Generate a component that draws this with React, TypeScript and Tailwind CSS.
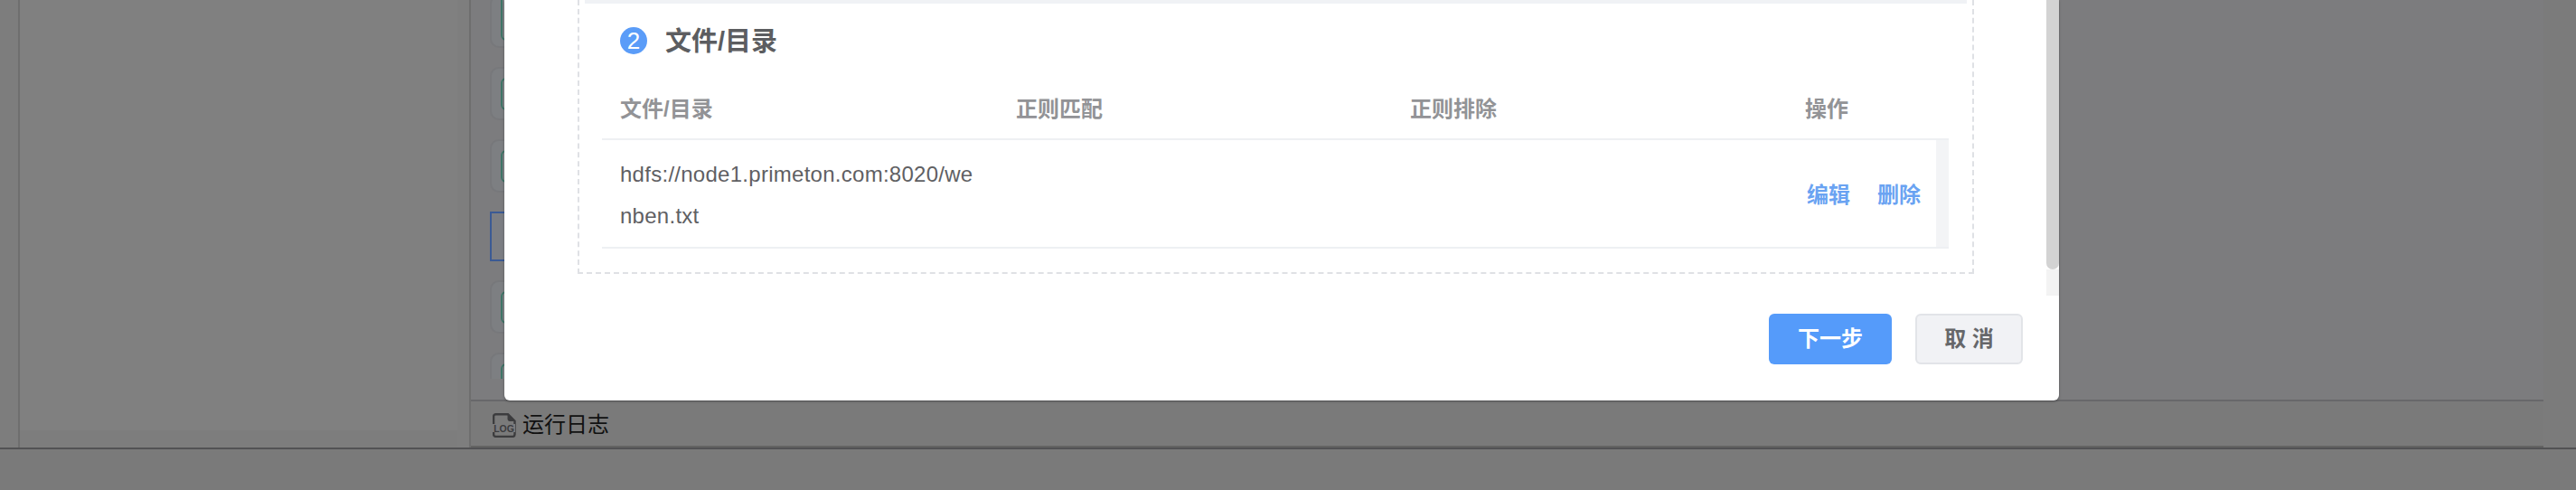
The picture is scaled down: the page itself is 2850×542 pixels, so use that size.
const cjk = "font-['Liberation_Sans','Noto_Sans_CJK_SC',sans-serif]";

function NodeCard({ selected, inner }: { selected?: boolean; inner?: string }) {
  if (selected) {
    return <div className="h-[55px] w-[200px] shrink-0 border-2 border-[#3b5a94] bg-[#7c7e83]" />;
  }
  return (
    <div className="flex h-[59px] w-[200px] shrink-0 items-center rounded-[10px] border-2 border-[#77787b] bg-[#7d7f82] pl-[10px]">
      <div className={`${inner} w-[60px] rounded-[6px] border-2 border-[#3f7668] bg-[#7f8386]`} />
    </div>
  );
}

function LogIcon() {
  return (
    <svg width="26" height="27" viewBox="0 0 26 27" fill="none" className="shrink-0">
      <path
        d="M3.5 1.2h13.5l7.5 7.5v14.8a2.4 2.4 0 0 1-2.4 2.4H3.5a2.4 2.4 0 0 1-2.4-2.4V3.6a2.4 2.4 0 0 1 2.4-2.4Z"
        stroke="#3c3c3e"
        strokeWidth="2.4"
      />
      <path d="M16.5 1.5v5a2.4 2.4 0 0 0 2.4 2.4h5.2Z" fill="#3c3c3e" />
      <rect x="0" y="12" width="25" height="9" fill="#7a7a7c" />
      <text x="12.5" y="20.5" textAnchor="middle" fontSize="10.5" fontWeight="700" fill="#3c3c3e" fontFamily="Liberation Sans, sans-serif">
        LOG
      </text>
    </svg>
  );
}

function Modal() {
  return (
    <div className="absolute left-[558px] top-0 flex h-[443px] w-[1720px] overflow-hidden rounded-b-[6px] bg-white shadow-[0_1px_3px_rgba(0,0,0,0.3)]">
      <div className="flex flex-1 flex-col pl-[81px]">
        <div className="flex h-[303px] w-[1545px] flex-col border-x-2 border-b-2 border-dashed border-[#dfe1e5] px-[6px]">
          <div className="h-[4px] w-full bg-[#f0f2f5]" />
          <div className="ml-[39px] mt-[26px] flex h-[30px] items-center gap-[20px]">
            <span className="flex h-[30px] w-[30px] items-center justify-center rounded-full bg-[#5a9cf8] text-[26px] text-white">2</span>
            <span className="pt-[1px] text-[29px] font-bold leading-[30px] text-[#5c5d60]">文件/目录</span>
          </div>
          <div className="ml-[19px] mt-[35px] w-[1490px]">
            <div className="grid h-[60px] grid-cols-[438px_436px_437px_1fr] border-b-2 border-[#eef0f3] pl-[20px] text-[24px] font-bold leading-[52px] text-[#929396]">
              <span>文件/目录</span>
              <span>正则匹配</span>
              <span>正则排除</span>
              <span>操作</span>
            </div>
            <div className="flex h-[120px] border-b-2 border-[#eef0f3]">
              <div className="grid flex-1 grid-cols-[438px_436px_437px_1fr] items-center pl-[20px] pt-[3px] text-[24px] leading-[46px] text-[#5f6063]">
                <span className="w-[396px] break-all tracking-[0.27px]">hdfs://node1.primeton.com:8020/wenben.txt</span>
                <span />
                <span />
                <span className="flex gap-[30px] whitespace-nowrap pl-[2px] font-bold text-[#6aa3f2]">
                  <span>编辑</span>
                  <span>删除</span>
                </span>
              </div>
              <div className="w-[14px] bg-[#f3f4f6]" />
            </div>
          </div>
        </div>
        <div className="mt-[44px] flex w-[1599px] justify-end gap-[26px]">
          <button className="h-[56px] w-[136px] rounded-[6px] bg-[#559bfa] text-[24px] font-bold text-white">下一步</button>
          <button className="h-[56px] w-[119px] rounded-[6px] border-2 border-[#e2e4e8] bg-[#f1f2f5] text-[24px] font-bold text-[#66676a]">取 消</button>
        </div>
      </div>
      <div className="flex w-[14px] flex-col">
        <div className="h-[298px] rounded-b-[7px] bg-[#d3d3d3]" />
        <div className="h-[29px] bg-[#f3f3f3]" />
      </div>
    </div>
  );
}

export default function App() {
  return (
    <div className={`${cjk} relative h-[542px] w-[2850px] overflow-hidden bg-[#7a7a7a]`}>
      <div className="flex h-[497px] border-b-2 border-[#525254]">
        <div className="flex flex-1">
          <div className="w-[20px] bg-[#7d7d7d]" />
          <div className="flex w-[501px] border-x-2 border-[#6e6e6e] bg-[#808080]">
            <div className="flex flex-1 flex-col">
              <div className="h-[476px] bg-[#808080]" />
              <div className="flex-1 bg-[#7d7d7d]" />
            </div>
            <div className="w-[13px] bg-[#7e7e7e]" />
          </div>
          <div className="flex flex-1 flex-col border-b-2 border-[#636363]">
            <div className="h-[444px] overflow-hidden border-b-2 border-[#68686a] bg-[#7c7c7e] pl-[21px]">
              <div className="-mt-[6px] flex h-[425px] flex-col gap-[21px] overflow-hidden">
                <NodeCard inner="h-[51px] -mt-[8px]" />
                <NodeCard inner="h-[36px]" />
                <NodeCard inner="h-[36px]" />
                <NodeCard selected />
                <NodeCard inner="h-[36px]" />
                <NodeCard inner="h-[36px]" />
              </div>
            </div>
            <div className="flex flex-1 items-center gap-[7px] pl-[24px] pt-[3px] text-[24px] leading-none text-[#111111]">
              <LogIcon />
              <span>运行日志</span>
            </div>
          </div>
        </div>
        <div className="w-[36px] bg-[#7b7b7b]" />
      </div>
      <Modal />
    </div>
  );
}
